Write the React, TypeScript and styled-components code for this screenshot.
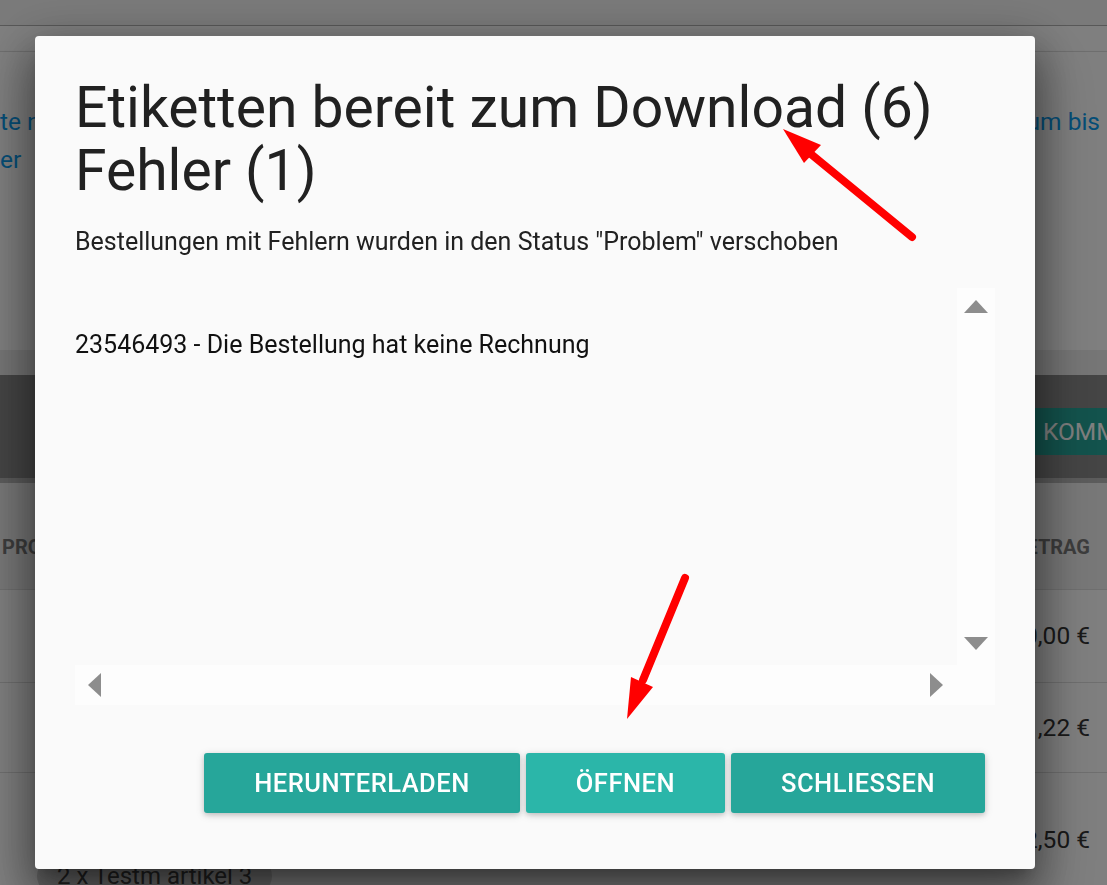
import React from 'react';
import styled, { createGlobalStyle } from 'styled-components';

const GlobalStyle = createGlobalStyle`
  html, body {
    margin: 0;
    padding: 0;
  }
  body {
    font-family: Roboto, "Noto Sans", Arial, sans-serif;
    background: #fff;
    overflow: hidden;
  }
`;

export default function App() {
  return (
    <>
      <GlobalStyle />
      <Page>
        <TopBar />
        <SubBar />
        <FilterCard>
          <LinkColumn>
            <LinkText>te neu drucken</LinkText>
            <LinkText>er</LinkText>
          </LinkColumn>
          <LinkText>Datum bis</LinkText>
        </FilterCard>
        <Gap />
        <Toolbar>
          <span />
          <ToolbarButton>Kommissionieren</ToolbarButton>
        </Toolbar>
        <TableHeader>
          <HeadCell>Produkte</HeadCell>
          <HeadCell>Betrag</HeadCell>
        </TableHeader>
        <Row $height={93}>
          <span />
          <Amount>10,00 €</Amount>
        </Row>
        <Row $height={90}>
          <span />
          <Amount>21,22 €</Amount>
        </Row>
        <Row $height={135}>
          <ChipCell>
            <Chip>2 x Testm artikel 3</Chip>
          </ChipCell>
          <Amount>32,50 €</Amount>
        </Row>
      </Page>

      <Overlay>
        <Modal>
          <Title>
            Etiketten bereit zum Download (6)
            <br />
            Fehler (1)
          </Title>
          <Subtitle>Bestellungen mit Fehlern wurden in den Status "Problem" verschoben</Subtitle>
          <ScrollBox>
            <ScrollContent>23546493 - Die Bestellung hat keine Rechnung</ScrollContent>
            <VTrack>
              <ScrollArrow width="24" height="13" viewBox="0 0 24 13">
                <polygon points="12,0 24,13 0,13" />
              </ScrollArrow>
              <ScrollArrow width="24" height="13" viewBox="0 0 24 13">
                <polygon points="0,0 24,0 12,13" />
              </ScrollArrow>
            </VTrack>
            <HTrack>
              <ScrollArrow width="13" height="24" viewBox="0 0 13 24">
                <polygon points="13,0 13,24 0,12" />
              </ScrollArrow>
              <ScrollArrow width="13" height="24" viewBox="0 0 13 24">
                <polygon points="0,0 13,12 0,24" />
              </ScrollArrow>
            </HTrack>
            <Corner />
          </ScrollBox>
          <Footer>
            <ActionButton>Herunterladen</ActionButton>
            <ActionButton $active>Öffnen</ActionButton>
            <ActionButton>Schliessen</ActionButton>
          </Footer>
        </Modal>
      </Overlay>

      <Annotations width="1107" height="885" viewBox="0 0 1107 885">
        <line x1="912" y1="237" x2="806" y2="150" />
        <polygon points="783,129 821,145 804,163" />
        <line x1="685" y1="578" x2="643" y2="680" />
        <polygon points="627,719 631,677 653,687" />
      </Annotations>
    </>
  );
}

/* background page */

const Page = styled.div`
  width: 1107px;
  height: 885px;
  overflow: hidden;
  background: #fff;
  color: #333;
`;

const TopBar = styled.div`
  height: 25px;
  background: #f4f4f4;
  border-bottom: 1px solid #b0b0b0;
`;

const SubBar = styled.div`
  height: 25px;
  border-bottom: 1px solid #e2e2e2;
`;

const FilterCard = styled.div`
  height: 298px;
  box-sizing: border-box;
  display: flex;
  justify-content: space-between;
  align-items: flex-start;
  padding: 51px 7px 0 0;
  box-shadow: 0 3px 6px rgba(0, 0, 0, 0.2);
`;

const LinkColumn = styled.div`
  display: flex;
  flex-direction: column;
`;

const LinkText = styled.span`
  font-size: 24.5px;
  line-height: 38px;
  color: #0a9cee;
  white-space: nowrap;
`;

const Gap = styled.div`
  height: 25px;
  background: #ececec;
`;

const Toolbar = styled.div`
  height: 108px;
  box-sizing: border-box;
  display: grid;
  grid-template-columns: 1015px auto;
  align-items: start;
  padding-top: 33px;
  background: #8a8a8a;
  border-bottom: 5px solid #b8b8b8;
`;

const ToolbarButton = styled.div`
  height: 47px;
  line-height: 47px;
  padding: 0 28px;
  background: #26a69a;
  color: #fff;
  font-size: 24.5px;
  text-transform: uppercase;
  white-space: nowrap;
  border-radius: 3px;
`;

const TableHeader = styled.div`
  height: 107px;
  box-sizing: border-box;
  display: grid;
  grid-template-columns: 1fr auto;
  align-items: start;
  padding: 49px 17px 0 2px;
  background: #f0f0f0;
  border-bottom: 1px solid #dedede;
`;

const HeadCell = styled.span`
  font-size: 20px;
  line-height: 30px;
  font-weight: 700;
  color: #7a7a7a;
  text-transform: uppercase;
`;

const Row = styled.div<{ $height: number }>`
  height: ${(p) => p.$height}px;
  box-sizing: border-box;
  display: grid;
  grid-template-columns: 1fr auto;
  align-items: center;
  padding: 0 17px 0 0;
  border-bottom: 1px solid #dedede;
`;

const Amount = styled.span`
  font-size: 24.5px;
  line-height: 36px;
  color: #333;
`;

const ChipCell = styled.div`
  align-self: end;
  padding: 0 0 12px 37px;
`;

const Chip = styled.span`
  display: inline-block;
  height: 38px;
  line-height: 38px;
  padding: 0 20px;
  border-radius: 19px;
  background: #d6d6d6;
  color: #444;
  font-size: 24px;
`;

/* modal */

const Overlay = styled.div`
  position: fixed;
  inset: 0;
  z-index: 10;
  background: rgba(0, 0, 0, 0.5);
  display: flex;
  align-items: flex-start;
  padding: 36px 0 0 35px;
`;

const Modal = styled.div`
  width: 1000px;
  height: 833px;
  box-sizing: border-box;
  padding: 40px 40px 0;
  background: #fafafa;
  border-radius: 4px;
  box-shadow: 0 24px 38px 3px rgba(0, 0, 0, 0.2), 0 9px 46px 8px rgba(0, 0, 0, 0.18),
    0 30px 60px 10px rgba(0, 0, 0, 0.22), 0 11px 15px -7px rgba(0, 0, 0, 0.25);
  color: #212121;
`;

const Title = styled.h3`
  margin: 0;
  font-size: 57px;
  line-height: 63px;
  font-weight: 400;
  color: #212121;
`;

const Subtitle = styled.p`
  margin: 22px 0 0;
  font-size: 25px;
  line-height: 36.75px;
  color: #212121;
`;

const ScrollBox = styled.div`
  margin-top: 27px;
  height: 417px;
  display: grid;
  grid-template-columns: 1fr 38px;
  grid-template-rows: 1fr 40px;
`;

const ScrollContent = styled.div`
  padding-top: 39px;
  font-size: 25px;
  line-height: 36.75px;
  color: #111;
  white-space: nowrap;
  overflow: hidden;
`;

const VTrack = styled.div`
  display: flex;
  flex-direction: column;
  justify-content: space-between;
  align-items: center;
  padding: 12px 0 15px;
  background: #fdfdfd;
`;

const HTrack = styled.div`
  display: flex;
  justify-content: space-between;
  align-items: center;
  padding: 0 14px 0 13px;
  background: #fdfdfd;
`;

const Corner = styled.div`
  background: #fdfdfd;
`;

const ScrollArrow = styled.svg`
  display: block;
  fill: #8d8d8d;
`;

const Footer = styled.div`
  display: flex;
  justify-content: flex-end;
  gap: 6px;
  margin-top: 48px;
  padding-right: 10px;
`;

const ActionButton = styled.button<{ $active?: boolean }>`
  height: 60px;
  padding: 0 50px;
  border: none;
  border-radius: 3px;
  background: ${(p) => (p.$active ? '#2bb6a9' : '#26a69a')};
  color: #fff;
  font-family: Roboto, "Noto Sans", Arial, sans-serif;
  font-size: 25.5px;
  font-weight: 500;
  letter-spacing: 0.5px;
  text-transform: uppercase;
  box-shadow: 0 2px 5px 0 rgba(0, 0, 0, 0.16), 0 2px 10px 0 rgba(0, 0, 0, 0.12);
  cursor: pointer;
`;

/* red annotation arrows drawn over the screenshot */

const Annotations = styled.svg`
  position: fixed;
  top: 0;
  left: 0;
  z-index: 20;
  pointer-events: none;

  line {
    stroke: #ff0000;
    stroke-width: 8;
    stroke-linecap: round;
  }
  polygon {
    fill: #ff0000;
  }
`;
